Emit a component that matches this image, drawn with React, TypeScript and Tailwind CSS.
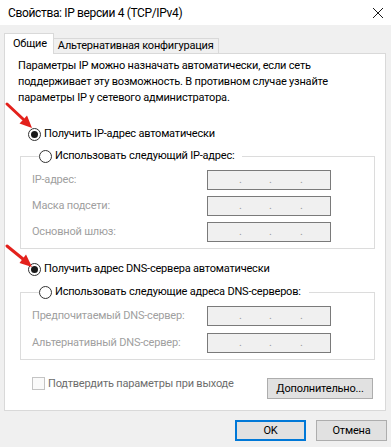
import React from 'react';

const font = "font-['Roboto','Noto_Sans',sans-serif]";

const Radio = ({ checked }: { checked?: boolean }) => (
  <span className="w-[13px] h-[13px] rounded-full border border-[#333333] bg-white flex items-center justify-center shrink-0">
    {checked && <span className="w-[7px] h-[7px] rounded-full bg-[#1a1a1a]" />}
  </span>
);

const IpBox = () => (
  <div className="w-[124px] h-[20px] border border-[#7a7a7a] bg-[#f0f0f0] relative shrink-0 text-[#9a9a9a]">
    <span className="absolute left-[31px] top-[3px] leading-[12px]">.</span>
    <span className="absolute left-[61px] top-[3px] leading-[12px]">.</span>
    <span className="absolute left-[92px] top-[3px] leading-[12px]">.</span>
  </div>
);

const FieldRow = ({ label }: { label: string }) => (
  <div className="flex items-center">
    <span className="w-[175px] shrink-0 whitespace-nowrap text-[#a0a0a0] leading-[16px]">{label}</span>
    <IpBox />
  </div>
);

const Group = ({ legend, rows, gap }: { legend: string; rows: string[]; gap: string }) => (
  <fieldset className="ml-[15px] mr-[10px] border border-[#dcdcdc] pl-[11px] pb-[6px]">
    <legend className="ml-[7px] pr-[8px] flex items-center gap-[3px] leading-[16px] whitespace-nowrap">
      <Radio />
      <span>{legend}</span>
    </legend>
    <div className={`flex flex-col mt-[6px] ${gap}`}>
      {rows.map((r) => (
        <FieldRow key={r} label={r} />
      ))}
    </div>
  </fieldset>
);

export default function App() {
  return (
    <div className={`w-[391px] h-[447px] bg-[#f0f0f0] text-[11px] tracking-[-0.2px] text-black relative overflow-hidden ${font}`}>
      {/* title bar */}
      <div className="h-[25px] bg-white flex items-center justify-between pl-[8px] pr-[6px]">
        <span className="text-[12px] tracking-[-0.35px]">Свойства: IP версии 4 (TCP/IPv4)</span>
        <svg width="12" height="12" viewBox="0 0 12 12" className="mr-[1px]">
          <path d="M1 1 L11 11 M11 1 L1 11" stroke="#1a1a1a" strokeWidth="1" />
        </svg>
      </div>

      <div className="pl-[4px] pr-[5px] pt-[8px]">
        {/* tabs */}
        <div className="flex items-end h-[20px]">
          <div className="h-[21px] -mb-px relative z-10 bg-white border border-b-0 border-[#d9d9d9] pl-[8px] pr-[6px] leading-[20px]">
            Общие
          </div>
          <div className="h-[15px] bg-[#f0f0f0] border border-l-0 border-b-0 border-[#d9d9d9] px-[4px] leading-[14px] whitespace-nowrap">
            Альтернативная конфигурация
          </div>
        </div>

        {/* panel */}
        <div className="h-[358px] bg-white border border-[#d9d9d9] pt-[4px]">
          <p className="pl-[13px] leading-[16px] whitespace-nowrap">
            Параметры IP можно назначать автоматически, если сеть
            <br />
            поддерживает эту возможность. В противном случае узнайте
            <br />
            параметры IP у сетевого администратора.
          </p>

          <div className="mt-[20px] ml-[23px] flex items-center gap-[3px] leading-[16px]">
            <Radio checked />
            <span>Получить IP-адрес автоматически</span>
          </div>

          <div className="mt-[6px]">
            <Group
              legend="Использовать следующий IP-адрес:"
              rows={['IP-адрес:', 'Маска подсети:', 'Основной шлюз:']}
              gap="gap-[6px]"
            />
          </div>

          <div className="mt-[12px] ml-[23px] flex items-center gap-[3px] leading-[16px]">
            <Radio checked />
            <span>Получить адрес DNS-сервера автоматически</span>
          </div>

          <div className="mt-[7px]">
            <Group
              legend="Использовать следующие адреса DNS-серверов:"
              rows={['Предпочитаемый DNS-сервер:', 'Альтернативный DNS-сервер:']}
              gap="gap-[7px]"
            />
          </div>

          <div className="mt-[18px] pl-[27px] pr-[12px] flex justify-between items-start">
            <div className="flex items-center gap-[3px] mt-[-1px] leading-[13px]">
              <span className="w-[13px] h-[13px] border border-[#c4c4c4] bg-[#fafafa]" />
              <span className="text-[#6d6d6d] whitespace-nowrap">Подтвердить параметры при выходе</span>
            </div>
            <button className="w-[106px] h-[21px] bg-[#e1e1e1] border border-[#adadad] leading-[18px] whitespace-nowrap">
              Дополнительно...
            </button>
          </div>
        </div>
      </div>

      {/* dialog buttons */}
      <div className="mt-[9px] pr-[4px] flex justify-end gap-[10px]">
        <button className="w-[71px] h-[21px] bg-[#e1e1e1] border-2 border-[#0078d7] leading-[16px]">OK</button>
        <button className="w-[71px] h-[21px] bg-[#e1e1e1] border border-[#adadad] leading-[18px]">Отмена</button>
      </div>

      {/* red annotation arrows */}
      <svg className="absolute inset-0 pointer-events-none" width="391" height="447">
        <g fill="#e3211c" stroke="#e3211c">
          <line x1="7" y1="104" x2="23" y2="119" strokeWidth="3" strokeLinecap="round" />
          <polygon points="32,128 19.5,123.5 27,115.5" stroke="none" />
          <line x1="7" y1="246" x2="23" y2="259" strokeWidth="3" strokeLinecap="round" />
          <polygon points="32,267 19.5,263 26,254.5" stroke="none" />
        </g>
      </svg>
    </div>
  );
}
